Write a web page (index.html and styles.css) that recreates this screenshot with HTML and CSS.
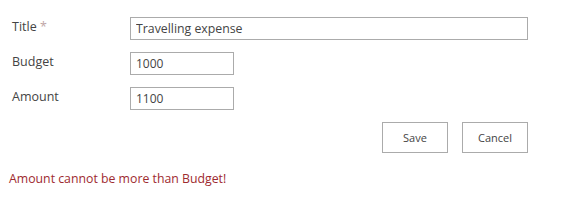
FILE: index.html
```html
<!DOCTYPE html>
<html>

<head>
<link rel="stylesheet" href="styles.css">
</head>

<body>
    <div class="form">
        <div class="row">
            <label class="label">Title <span class="required">*</span></label>
            <input class="field wide" type="text" value="Travelling expense">
        </div>
        <div class="row">
            <label class="label">Budget</label>
            <input class="field short" type="text" value="1000">
        </div>
        <div class="row">
            <label class="label">Amount</label>
            <input class="field short" type="text" value="1100">
        </div>
        <div class="actions">
            <button class="button">Save</button>
            <button class="button">Cancel</button>
        </div>
        <div class="error">Amount cannot be more than Budget!</div>
    </div>
</body>

</html>
```
FILE: styles.css
```css
body {
    margin: 0;
    background-color: white;
    font-family: "Open Sans", "Noto Sans", sans-serif;
    color: #444;
}

.form {
    width: 528px;
    padding-top: 17px;
}

.row {
    display: flex;
    align-items: center;
    height: 23px;
    margin-bottom: 12px;
}

.label {
    width: 118px;
    padding-left: 12px;
    font-size: 12.5px;
    position: relative;
    top: -2px;
}

.required {
    color: #c0a6a6;
}

.field {
    box-sizing: border-box;
    height: 23px;
    border: 1px solid #ababab;
    padding: 0 5px;
    font-family: inherit;
    font-size: 12.3px;
    color: #444;
    background-color: white;
    outline: none;
}

.wide {
    width: 398px;
}

.short {
    width: 104px;
    font-size: 12px;
}

.actions {
    display: flex;
    justify-content: flex-end;
    gap: 14px;
    margin-top: 2px;
}

.button {
    box-sizing: border-box;
    width: 66px;
    height: 31px;
    border: 1px solid #ababab;
    background-color: white;
    font-family: inherit;
    font-size: 11px;
    color: #444;
}

.error {
    margin-top: 17px;
    padding-left: 9px;
    font-size: 12.3px;
    color: #9e2a2f;
}
```
